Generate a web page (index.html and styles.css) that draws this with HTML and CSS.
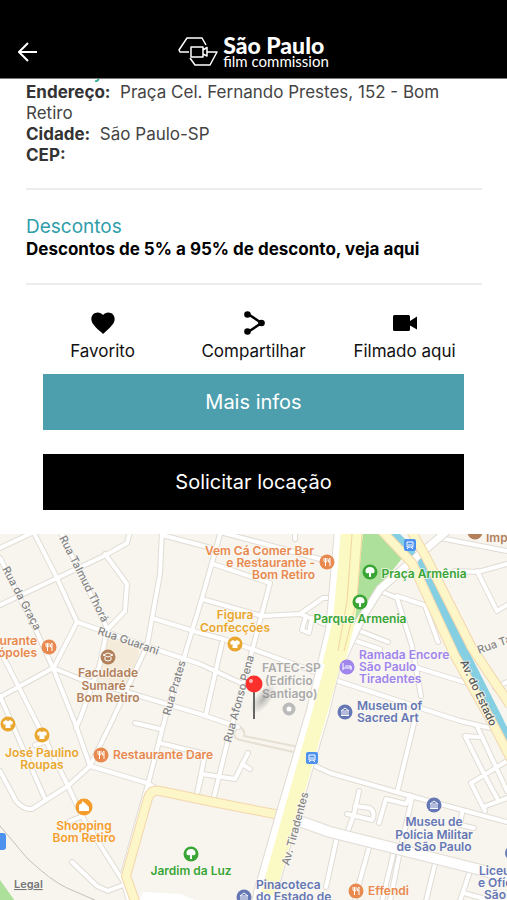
FILE: index.html
```html
<!DOCTYPE html>
<html lang="pt-BR">
<head>
<meta charset="utf-8">
<meta name="viewport" content="width=device-width, initial-scale=1">
<title>São Paulo Film Commission</title>
<link rel="stylesheet" href="styles.css">
</head>
<body>
<header class="topbar">
  <button class="back" type="button" aria-label="Voltar">
    <svg width="20" height="20" viewBox="0 0 20 20"><path d="M19 10H1.500M10 1L1 10L10 19"/></svg>
  </button>
  <div class="brand">
    <svg class="brand-mark" width="40" height="32" viewBox="0 0 40 32"><path d="M28 9L24 2H9L1 14L2 16H11M13 11H25V21H13ZM25 14L29 11.500V20L25 18M29 16H39L32 29H17L12 22"/></svg>
    <div class="brand-text">
      <span class="brand-name">São Paulo</span>
      <span class="brand-sub">film commission</span>
    </div>
  </div>
</header>

<main>
  <section class="block address">
    <svg class="tail" width="6" height="3" viewBox="0 0 6 3"><path d="M4.500 0Q4 2 1 2.500"/></svg>
    <p><strong>Endereço:</strong>&nbsp; Praça Cel. Fernando Prestes, 152 - Bom Retiro</p>
    <p><strong>Cidade:</strong>&nbsp; São Paulo-SP</p>
    <p><strong>CEP:</strong></p>
  </section>

  <section class="block discounts">
    <h2>Descontos</h2>
    <a href="#descontos">Descontos de 5% a 95% de desconto, veja aqui</a>
  </section>

  <nav class="actions">
    <button type="button">
      <svg width="28" height="28" viewBox="0 0 24 24"><path d="M12 21.350l-1.450-1.320C5.400 15.360 2 12.280 2 8.500 2 5.420 4.420 3 7.500 3c1.740 0 3.410.810 4.500 2.090C13.090 3.810 14.760 3 16.500 3 19.580 3 22 5.420 22 8.500c0 3.780-3.400 6.860-8.550 11.540L12 21.350z"/></svg>
      Favorito
    </button>
    <button type="button">
      <svg width="28" height="28" viewBox="0 0 28 28"><path class="link" d="M8 5L21.500 14L8 23"/><circle cx="7.500" cy="5.500" r="3.300"/><circle cx="21.500" cy="14" r="3.300"/><circle cx="7.500" cy="22.500" r="3.300"/></svg>
      Compartilhar
    </button>
    <button type="button">
      <svg width="28" height="28" viewBox="0 0 28 28"><path d="M3.500 6H17.500Q19 6 19 7.500V12L26 7.500V20.500L19 16.500V20.500Q19 22 17.500 22H3.500Q2 22 2 20.500V7.500Q2 6 3.500 6Z"/></svg>
      Filmado aqui
    </button>
  </nav>

  <div class="cta">
    <button class="more" type="button">Mais infos</button>
    <button class="request" type="button">Solicitar locação</button>
  </div>

  <svg class="map" viewBox="0 533 507 367" role="img" aria-label="Mapa">
    <defs>
      <g id="streets">
        <path d="M0 547L36 530M0 604L106 554L127 542L130 530M33 530L57 577L77 621L53 668M60 530L107 627M105 553L127 583L125 610L107 629L100 663L80 718L76 727"/>
        <path d="M77 621L146 645L200 663L243 683M152 617L200 632L223 638L252 648L318 672M162 530L160 573L147 645L112 720L90 765M162 534L215 548M221 530L202 597L182 663L167 710L147 787L123 873"/>
        <path d="M220 531L320 558M213 563L270 582L252 650L227 743L213 800M202 598L262 615L300 613L323 597H337M300 613L337 628M312 617L309 632L302 629L306 615M222 642L206 713M0 696L53 667L80 678L130 692L200 713L238 726M295 530V538"/>
        <path d="M0 557L35 627L53 667L75 722L90 765M3 655L37 722L68 785L83 817L123 880L130 903M0 695L45 798M0 770L16 800Q24 809 32 808L68 785L90 765L147 782L160 790M35 744L47 740M70 820L83 815"/>
        <path d="M135 722L160 728M160 742L205 753L197 793M72 861L97 885L108 890L123 884M197 793L202 773L235 778L248 752M242 763L250 768"/>
        <path d="M315 765L330 772L407 794L507 821M415 718L398 788M338 680L460 720L490 727M380 590L397 597L412 645L421 695M397 595L433 607M425 605L438 641M360 630L388 641M356 640L380 648M418 667L470 683"/>
        <path d="M455 570L478 571L507 563M477 570L497 610L507 604M440 537L507 550M465 735L485 775L497 797M477 725L507 790M465 735L479 736M471 782L507 760M471 782L485 810M483 806L507 797M495 687L507 681"/>
        <path d="M412 797L400 850L390 900M394 850L382 900M337 836L326 886M370 843L355 897M435 863L426 900M469 873L460 900M464 892L485 898M359 790L354 813L345 838M355 805L370 807Q376 812 372 819L347 813M379 822L386 798L406 803L410 794M462 812L460 824L474 827"/>
      </g>
      <g id="yellow">
        <path d="M136 903L126 875L148 797Q151 788 160 790L213 801L285 815"/>
        <path d="M380 528L412 562L455 655L493 723L512 760M410 528L426 556L472 647L510 704"/>
      </g>
      <g id="food"><circle r="7.500"/><path class="glyph" d="M-3-4V-1Q-3 0-1.500 0V4M-1.500-4V0Q0 0 0-1V-4M3 4V-4Q1 -3 1.500 0H3"/></g>
      <g id="shirt"><circle r="7.500"/><path class="solid" d="M-2-4Q0-2 2-4L5-2L4 1L2.500 0V4H-2.500V0L-4 1L-5-2Z"/></g>
      <g id="tree"><circle r="7.500"/><path class="solid" d="M-1 5V1Q-5 2-4.500-1.500Q-4-5 0-5Q4-5 4.500-1.500Q5 2 1 1V5Z"/></g>
      <g id="museum"><circle r="7.500"/><path class="glyph" d="M-4-1L0-4L4-1ZM-4 3.500H4M-3 0V3M-1 0V3M1 0V3M3 0V3"/></g>
      <g id="metro"><rect x="-6" y="-6" width="12" height="12" rx="2"/><path class="glyph" d="M-3-3H3V2H-3ZM-3 4L-1 2M3 4L1 2M-2 0H2"/></g>
      <radialGradient id="shade"><stop offset="0" stop-color="#777" stop-opacity=".5"/><stop offset="1" stop-color="#777" stop-opacity="0"/></radialGradient>
    </defs>

    <rect class="land" y="533" width="507" height="367"/>
    <path class="campus" d="M108 635L140 647L129 690L98 678Z"/>
    <path class="luz" d="M143 891L180 893L205 903H137Z"/>
    <path class="park" d="M363 533H386L404 555L376 590L344 655ZM0 879L15 900H0Z"/>
    <path class="rail" d="M0 825L27 857Q50 879 67 887L104 903"/>
    <path class="path" d="M238 725Q246 729 244 735L299 746M240 739L298 752M238 725Q230 737 240 739"/>
    <use href="#streets" class="casing"/>
    <use href="#streets" class="street"/>
    <path class="wide-casing" d="M285 815L330 831L477 868L510 877"/>
    <path class="wide" d="M285 815L330 831L477 868L510 877"/>
    <path class="road-casing" d="M343 657L360 620L380 588L420 553L447 530"/>
    <path class="road" d="M343 657L360 620L380 588L420 553L447 530"/>
    <path class="river" d="M390 530L410 550M423 562L463 650L497 717L512 748"/>
    <use href="#yellow" class="yellow-casing"/>
    <use href="#yellow" class="yellow"/>
    <path class="avenue-casing" d="M346 530L337 630L318 710L288 812L265 893L263 903"/>
    <path class="avenue-side" d="M346 530L337 630L318 710L288 812L265 893L263 903"/>
    <path class="avenue" d="M352 530L344 620L323 700L291 812L268 893"/>
    <path class="avenue top" d="M352 530L344 620L333 665"/>
    <path class="lane" d="M352 533L347 600L338 650M362 533L357 598L344 650"/>

    <g class="road-names">
      <text transform="translate(59 537) rotate(63)">Rua Talmud Thorá</text>
      <text transform="translate(2 568) rotate(62)">Rua da Graça</text>
      <text transform="translate(97 633) rotate(19)">Rua Guarani</text>
      <text transform="translate(170 715) rotate(-74)">Rua Prates</text>
      <text transform="translate(231 742) rotate(-75)">Rua Afonso Pena</text>
      <text transform="translate(289 865) rotate(-75)">Av. Tiradentes</text>
      <text transform="translate(479 653) rotate(-20)">Rua Ta</text>
      <text class="dark" transform="translate(460 661) rotate(65)">Av. do Estado</text>
    </g>

    <g class="orange">
      <use href="#food" x="327" y="561"/><use href="#food" x="49" y="646"/><use href="#food" x="101" y="754"/><use href="#food" x="356" y="890"/>
      <g class="end"><text x="314" y="554">Vem Cá Comer Bar</text><text x="315" y="566">e Restaurante -</text><text x="315" y="578">Bom Retiro</text>
      <text x="37" y="644">urante</text><text x="37" y="656">ópoles</text></g>
      <text x="113" y="758">Restaurante Dare</text><text x="368" y="894">Effendi</text>
    </g>
    <g class="gold mid">
      <use href="#shirt" x="235" y="643"/><use href="#shirt" x="8" y="723"/><use href="#shirt" x="42" y="734"/>
      <text x="235" y="618">Figura</text><text x="235" y="631">Confecções</text>
      <text x="42" y="756">José Paulino</text><text x="42" y="768">Roupas</text>
      <g class="shop"><circle cx="84" cy="806" r="8.500"/><path class="solid" d="M79 810V804L82 802V800L85 802L89 806V810Z"/>
      <text x="84" y="829">Shopping</text><text x="84" y="841">Bom Retiro</text></g>
    </g>
    <g class="brown mid">
      <circle cx="108" cy="656" r="7.500"/><path class="glyph" d="M103 654L108 652L113 654L108 656ZM105 656V659Q108 661 111 659V656"/>
      <text x="108" y="676">Faculdade</text><text x="108" y="689">Sumaré -</text><text x="108" y="701">Bom Retiro</text>
      <circle cx="475" cy="531" r="7.500"/><text class="start" x="486" y="541">Imp</text>
    </g>
    <g class="green mid">
      <use href="#tree" x="370" y="571"/><use href="#tree" x="360" y="601"/><use href="#tree" x="191" y="853"/>
      <text x="424" y="577">Praça Armênia</text><text x="360" y="622">Parque Armenia</text><text x="191" y="874">Jardim da Luz</text>
    </g>
    <g class="violet">
      <circle cx="347" cy="666" r="7.500"/><path class="glyph" d="M343 662V669M343 667H351V665H345M351 666V669"/>
      <text x="359" y="658">Ramada Encore</text><text x="359" y="670">São Paulo</text><text x="359" y="682">Tiradentes</text>
    </g>
    <g class="blue">
      <use href="#museum" x="345" y="711"/><use href="#museum" x="434" y="804"/><use href="#museum" x="244" y="896"/><circle cx="512" cy="852" r="7"/>
      <text x="357" y="709">Museum of</text><text x="357" y="721">Sacred Art</text>
      <g class="mid"><text x="434" y="825">Museu de</text><text x="434" y="838">Polícia Militar</text><text x="434" y="850">de São Paulo</text></g>
      <text x="256" y="888">Pinacoteca</text><text x="256" y="900">do Estado de</text>
      <text x="479" y="874">Liceu</text><text x="478" y="886">e Ofíc</text><text x="484" y="898">São</text>
    </g>
    <g class="metro"><use href="#metro" x="410" y="544"/><use href="#metro" x="312" y="757"/><rect x="-8" y="832" width="14" height="17" rx="3"/></g>

    <g class="gray">
      <text x="262" y="671">FATEC-SP</text><text x="265" y="684">(Edifício</text><text x="262" y="697">Santiago)</text>
      <circle class="ring" cx="289" cy="708" r="4.500"/>
    </g>
    <ellipse fill="url(#shade)" cx="263" cy="698" rx="8" ry="18" transform="rotate(38 263 698)"/>
    <path class="needle" d="M254 690V718"/>
    <circle class="pin" cx="254" cy="683" r="8.500"/><circle class="shine" cx="251" cy="680" r="2"/>
    <text class="legal" x="14" y="887">Legal</text>
  </svg>
</main>
</body>
</html>
```
FILE: styles.css
```css
* { box-sizing: border-box; }
body {
  margin: 0;
  background: #fff;
  color: #000;
  font-family: Inter, "Liberation Sans", sans-serif;
}
button { border: 0; font: inherit; cursor: pointer; }

.topbar {
  display: grid;
  grid-template-columns: 56px 1fr 56px;
  align-items: center;
  height: 79px;
  padding-top: 26px;
  background: #000;
  border-bottom: 1px solid #777;
}
.back { display: flex; padding: 0 0 0 18px; background: none; }
.back path, .brand-mark path { fill: none; stroke: #fff; stroke-width: 2; }
.brand-mark path { stroke-width: 1.5; stroke-linejoin: round; }
.brand { display: flex; justify-content: center; align-items: center; gap: 5px; color: #fff; }
.brand-text { display: flex; flex-direction: column; font-family: Lato, sans-serif; }
.brand-name { font-size: 23px; font-weight: 900; line-height: 18px; }
.brand-sub { font-size: 15px; line-height: 14px; }

.block { margin: 0 25px 0 26px; border-bottom: 2px solid #eceeee; }
.address {
  position: relative;
  padding: 3px 0 22px;
  color: #444;
  font-size: 17px;
  line-height: 21px;
}
.address p { margin: 0; }
.address strong { color: #333; }
.tail { position: absolute; top: 0; left: 68px; }
.tail path { fill: none; stroke: #35b09c; stroke-width: 2; }
.discounts { padding: 25px 0 23px; }
.discounts h2 { margin: 0; color: #2f9eab; font-size: 19px; font-weight: 400; line-height: 24px; }
.discounts a {
  display: block;
  color: #000;
  font-size: 17px;
  font-weight: 700;
  line-height: 21px;
  text-decoration: none;
}

.actions { display: grid; grid-template-columns: repeat(3, 1fr); padding: 24px 27px 0; }
.actions button {
  display: flex;
  flex-direction: column;
  align-items: center;
  gap: 4px;
  padding: 0;
  background: none;
  color: #111;
  font-size: 17px;
  line-height: 20px;
}
.link { fill: none; stroke: #000; stroke-width: 2.5; }

.cta { display: flex; flex-direction: column; gap: 24px; padding: 13px 43px 24px; }
.cta button { height: 56px; color: #fff; font-size: 20px; }
.more { background: #4d9fae; }
.request { background: #000; }

.map { display: block; width: 100%; height: auto; font-size: 12px; font-weight: 600; }
.land { fill: #f8f5ee; }
.campus { fill: #f5ebda; }
.luz { fill: #fff; }
.park { fill: #ade09a; }
.rail, .path, .casing, .street, .wide-casing, .wide, .road-casing, .road, .river,
.yellow-casing, .yellow, .avenue-casing, .avenue-side, .avenue, .lane { fill: none; stroke-linejoin: round; }
.rail { stroke: #c2c0bc; stroke-width: 1; }
.path { stroke: #e6e0d4; stroke-width: 2; }
.casing { stroke: #e0dcd5; stroke-width: 6; stroke-linecap: round; }
.street { stroke: #fff; stroke-width: 4; stroke-linecap: round; }
.wide-casing { stroke: #e0dcd5; stroke-width: 12; }
.wide { stroke: #fff; stroke-width: 10; }
.road-casing { stroke: #e0dcd5; stroke-width: 9; }
.road { stroke: #fff; stroke-width: 7; }
.river { stroke: #85cfe3; stroke-width: 10; stroke-linecap: round; }
.yellow-casing { stroke: #f2d6ae; stroke-width: 10; }
.yellow { stroke: #fdf6c8; stroke-width: 8; }
.avenue-casing { stroke: #e0dcd5; stroke-width: 24; }
.avenue-side { stroke: #fff; stroke-width: 22; }
.avenue { stroke: #fbf9c4; stroke-width: 15; }
.top { stroke-width: 22; }
.lane { stroke: #f3d5a0; stroke-width: 1; }

.map text { paint-order: stroke; stroke: #fbf9f4; stroke-opacity: .7; stroke-width: 2; stroke-linejoin: round; }
.road-names { fill: #858585; font-size: 11px; font-weight: 500; }
.dark { fill: #555; }
.orange { fill: #e8894f; }
.gold { fill: #e9a72f; }
.shop { fill: #f59d2c; }
.brown { fill: #b2805b; }
.green { fill: #38a535; }
.violet { fill: #9f85ec; }
.blue { fill: #6577b5; }
.gray { fill: #aaa; }
.metro { fill: #4d92ef; }
.mid text { text-anchor: middle; }
.mid .start { text-anchor: start; }
.end { text-anchor: end; }
.glyph { fill: none; stroke: #fff; stroke-width: 1; }
.solid { fill: #fff; }
.ring { fill: #fff; stroke: #bbb; stroke-width: 4; }
.needle { stroke: #666; stroke-width: 2; }
.pin { fill: #fb2f2b; }
.shine { fill: #ffb5af; }
.legal { fill: #777; font-size: 11px; text-decoration: underline; }
```
